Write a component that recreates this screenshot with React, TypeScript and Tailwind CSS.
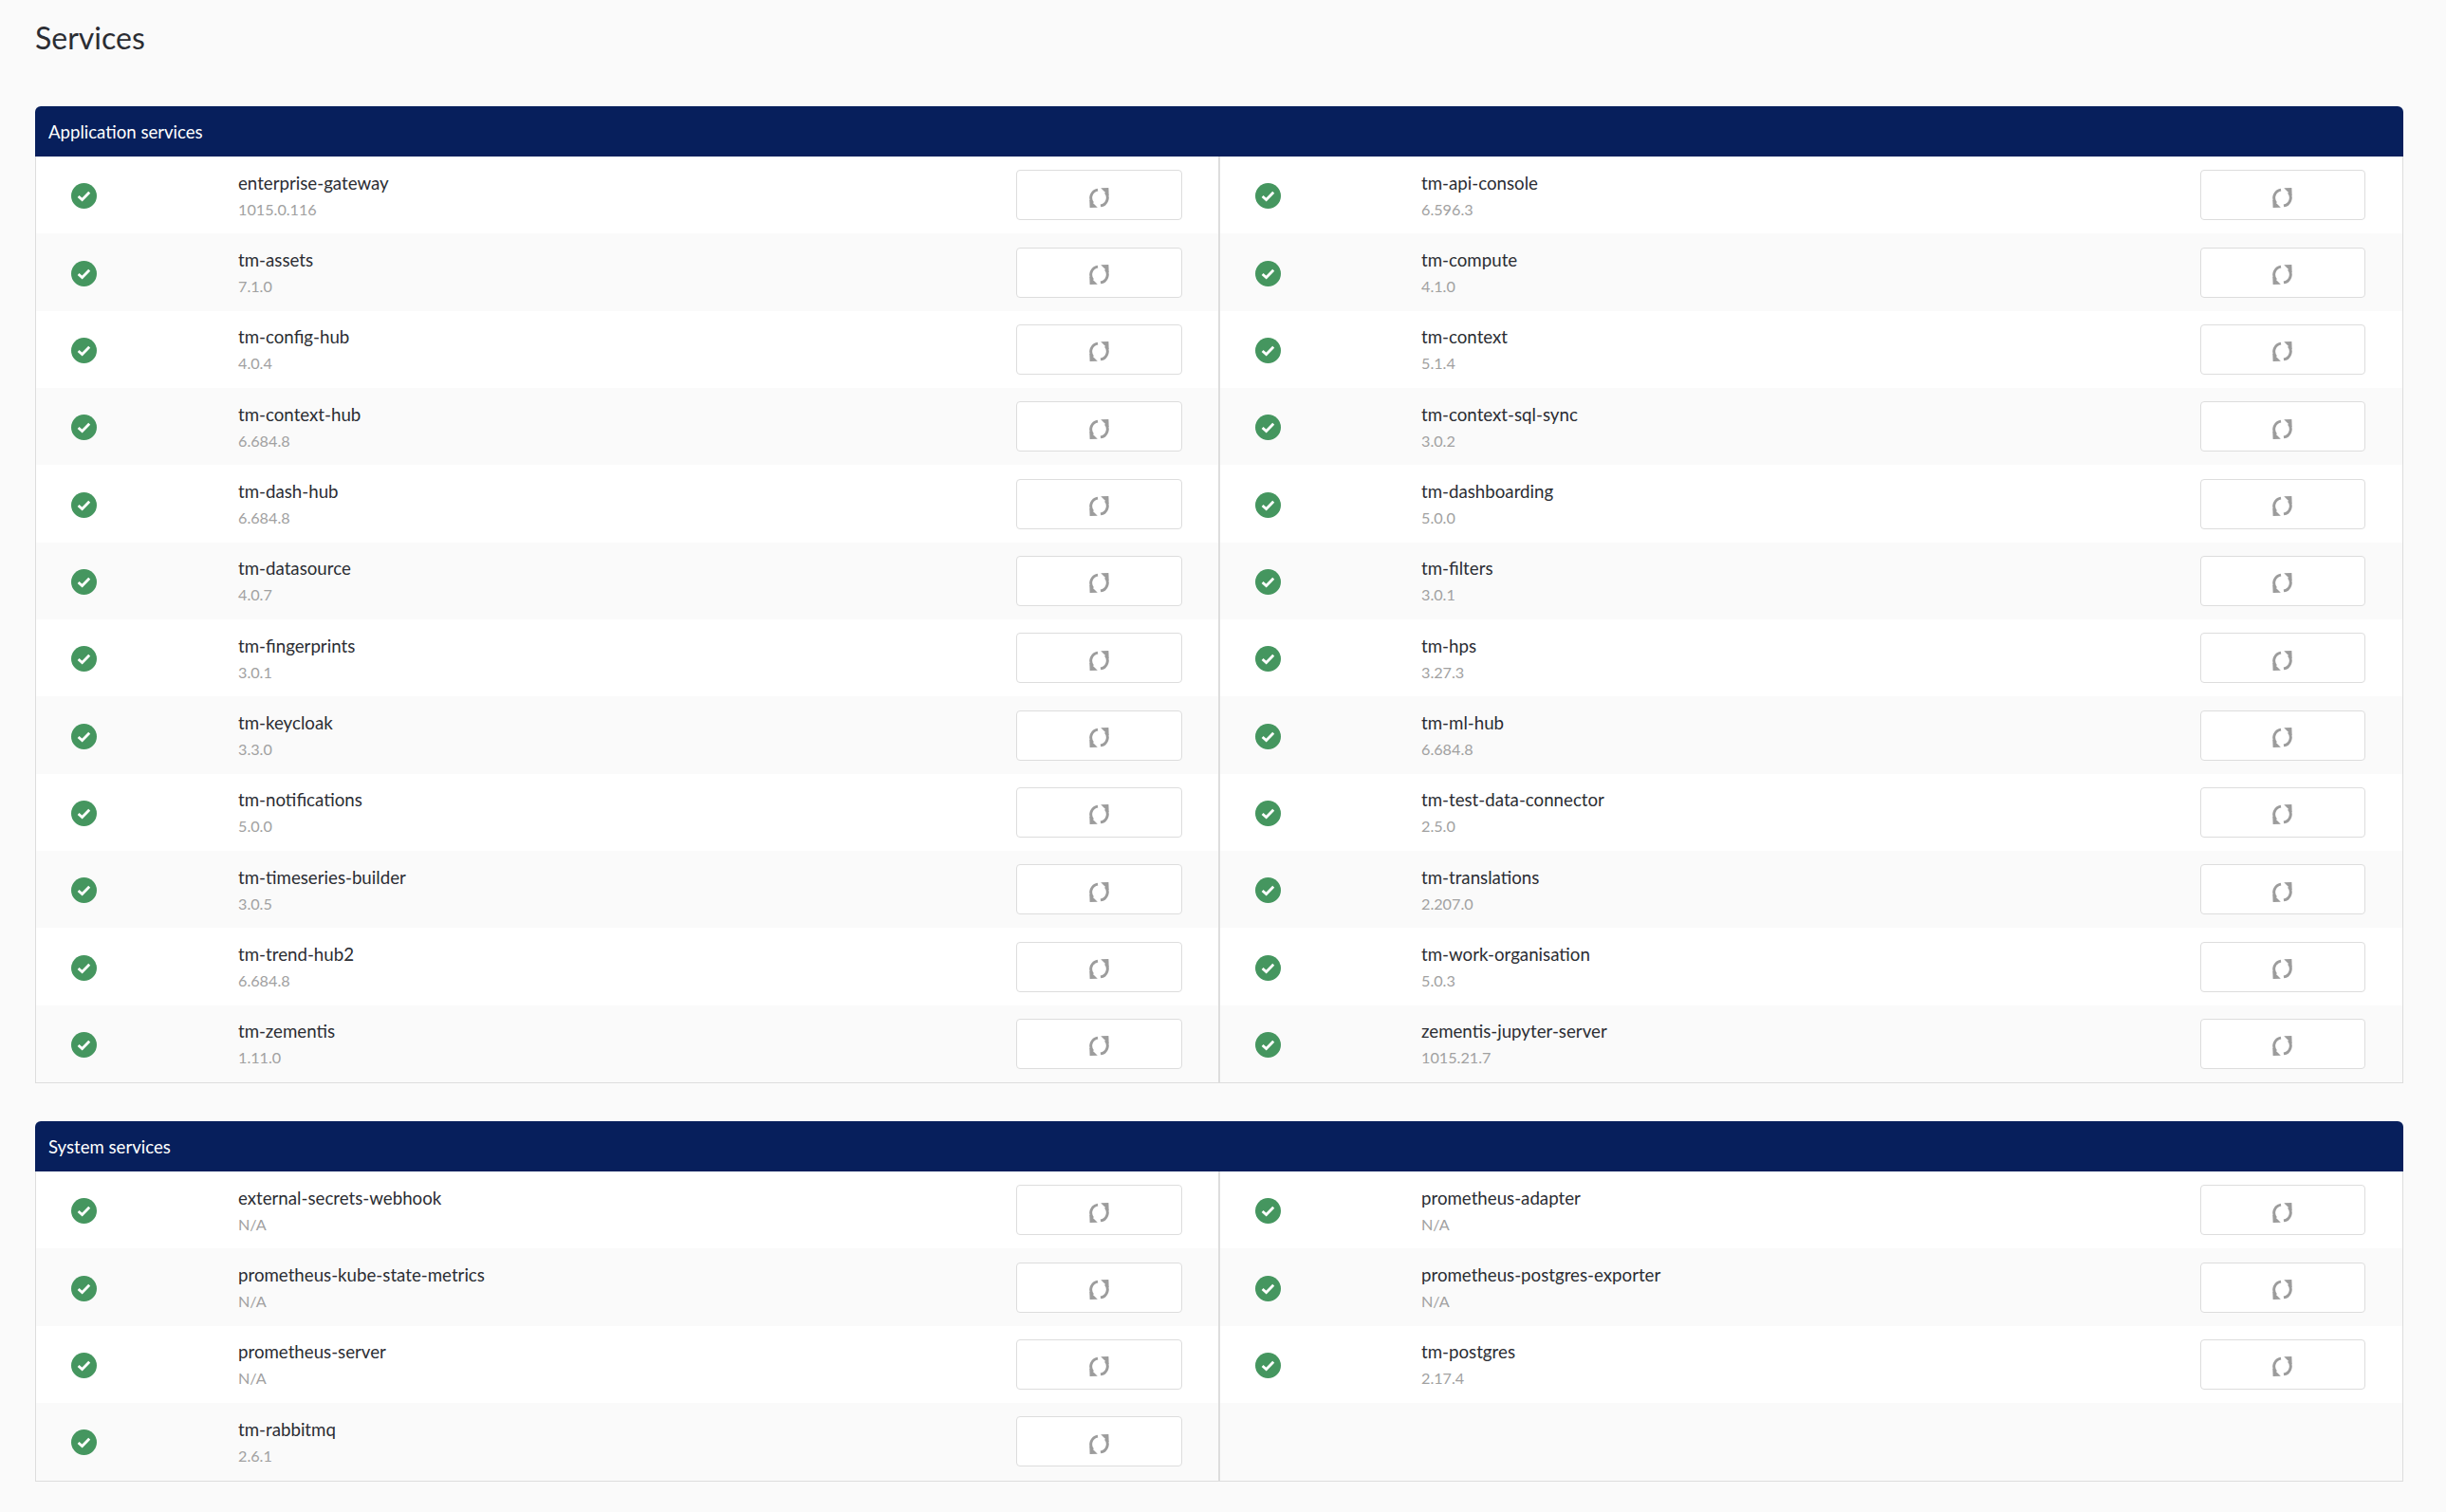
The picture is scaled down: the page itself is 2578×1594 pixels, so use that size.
const app = [
  ["enterprise-gateway", "1015.0.116"], ["tm-api-console", "6.596.3"],
  ["tm-assets", "7.1.0"], ["tm-compute", "4.1.0"],
  ["tm-config-hub", "4.0.4"], ["tm-context", "5.1.4"],
  ["tm-context-hub", "6.684.8"], ["tm-context-sql-sync", "3.0.2"],
  ["tm-dash-hub", "6.684.8"], ["tm-dashboarding", "5.0.0"],
  ["tm-datasource", "4.0.7"], ["tm-filters", "3.0.1"],
  ["tm-fingerprints", "3.0.1"], ["tm-hps", "3.27.3"],
  ["tm-keycloak", "3.3.0"], ["tm-ml-hub", "6.684.8"],
  ["tm-notifications", "5.0.0"], ["tm-test-data-connector", "2.5.0"],
  ["tm-timeseries-builder", "3.0.5"], ["tm-translations", "2.207.0"],
  ["tm-trend-hub2", "6.684.8"], ["tm-work-organisation", "5.0.3"],
  ["tm-zementis", "1.11.0"], ["zementis-jupyter-server", "1015.21.7"],
];
const sys = [
  ["external-secrets-webhook", "N/A"], ["prometheus-adapter", "N/A"],
  ["prometheus-kube-state-metrics", "N/A"], ["prometheus-postgres-exporter", "N/A"],
  ["prometheus-server", "N/A"], ["tm-postgres", "2.17.4"],
  ["tm-rabbitmq", "2.6.1"],
];

function Check() {
  return (
    <svg viewBox="0 0 27 27" className="w-[27px] h-[27px] shrink-0 mt-[2px]">
      <circle cx="13.5" cy="13.5" r="13.5" fill="#45965f" />
      <path d="M7.6 14 L11.6 17.6 L19.2 9.8" fill="none" stroke="#fff" strokeWidth="2.8" />
    </svg>
  );
}

function Sync() {
  return (
    <svg viewBox="0 0 20 20" className="w-[21px] h-[21px] mt-[5px]">
      <path d="M8.6 2 A8.2 8.2 0 0 0 3.6 15.4" fill="none" stroke="#9c9c9c" strokeWidth="2.8" />
      <path d="M0.3 11.8 L8.4 19.8 L0.6 20 Z" fill="#9c9c9c" />
      <path d="M11.4 18 A8.2 8.2 0 0 0 16.4 4.6" fill="none" stroke="#9c9c9c" strokeWidth="2.8" />
      <path d="M19.7 8.2 L11.6 0.2 L19.4 0 Z" fill="#9c9c9c" />
    </svg>
  );
}

function Row({ name, version, shaded, left }: { name: string; version: string; shaded: boolean; left: boolean }) {
  return (
    <div className={`h-[81.35px] flex items-center ${left ? "pl-[37px] pr-[38.5px]" : "pl-[36.5px] pr-[39px] border-l-2 border-[#dddddd]"} ${shaded ? "bg-[#fafafa]" : "bg-white"}`}>
      <Check />
      <div className={`${left ? "w-[149px]" : "w-[148.5px]"} shrink-0`} />
      <div className="flex-1 min-w-0">
        <div className="text-[18.7px] leading-[28px] text-[#2b2d33]">{name}</div>
        <div className="text-[16.2px] leading-[24px] mt-[2px] text-[#a1a1a1]">{version}</div>
      </div>
      <button className="w-[174.5px] h-[53px] flex items-center justify-center rounded-[4px] border-[1.5px] border-[#dddddd] bg-white">
        <Sync />
      </button>
    </div>
  );
}

function Section({ title, items, mt }: { title: string; items: string[][]; mt: string }) {
  const rows = Array.from({ length: Math.ceil(items.length / 2) }, (_, i) => i);
  return (
    <section className={mt}>
      <div className="h-[53px] bg-[#071f5c] rounded-t-[6px] flex items-center pl-[14px] pt-[2px] text-[18.6px] text-white">{title}</div>
      <div className="border-x border-b border-[#dddddd]">
        {rows.map((r) => {
          const a = items[r * 2];
          const b = items[r * 2 + 1];
          const shaded = r % 2 === 1;
          return (
            <div key={r} className="grid grid-cols-[1246fr_1248fr]">
              <Row name={a[0]} version={a[1]} shaded={shaded} left />
              {b ? (
                <Row name={b[0]} version={b[1]} shaded={shaded} left={false} />
              ) : (
                <div className={`border-l-2 border-[#dddddd] ${shaded ? "bg-[#fafafa]" : "bg-white"}`} />
              )}
            </div>
          );
        })}
      </div>
    </section>
  );
}

export default function App() {
  return (
    <div className="min-h-[1594px] bg-[#fafafa] pl-[37px] pr-[45px]" style={{ fontFamily: "Lato, sans-serif" }}>
      <h1 className="pt-[18px] text-[32px] leading-[44px] text-[#2b2d33]">Services</h1>
      <Section title="Application services" items={app} mt="mt-[50px]" />
      <Section title="System services" items={sys} mt="mt-[40px]" />
    </div>
  );
}
